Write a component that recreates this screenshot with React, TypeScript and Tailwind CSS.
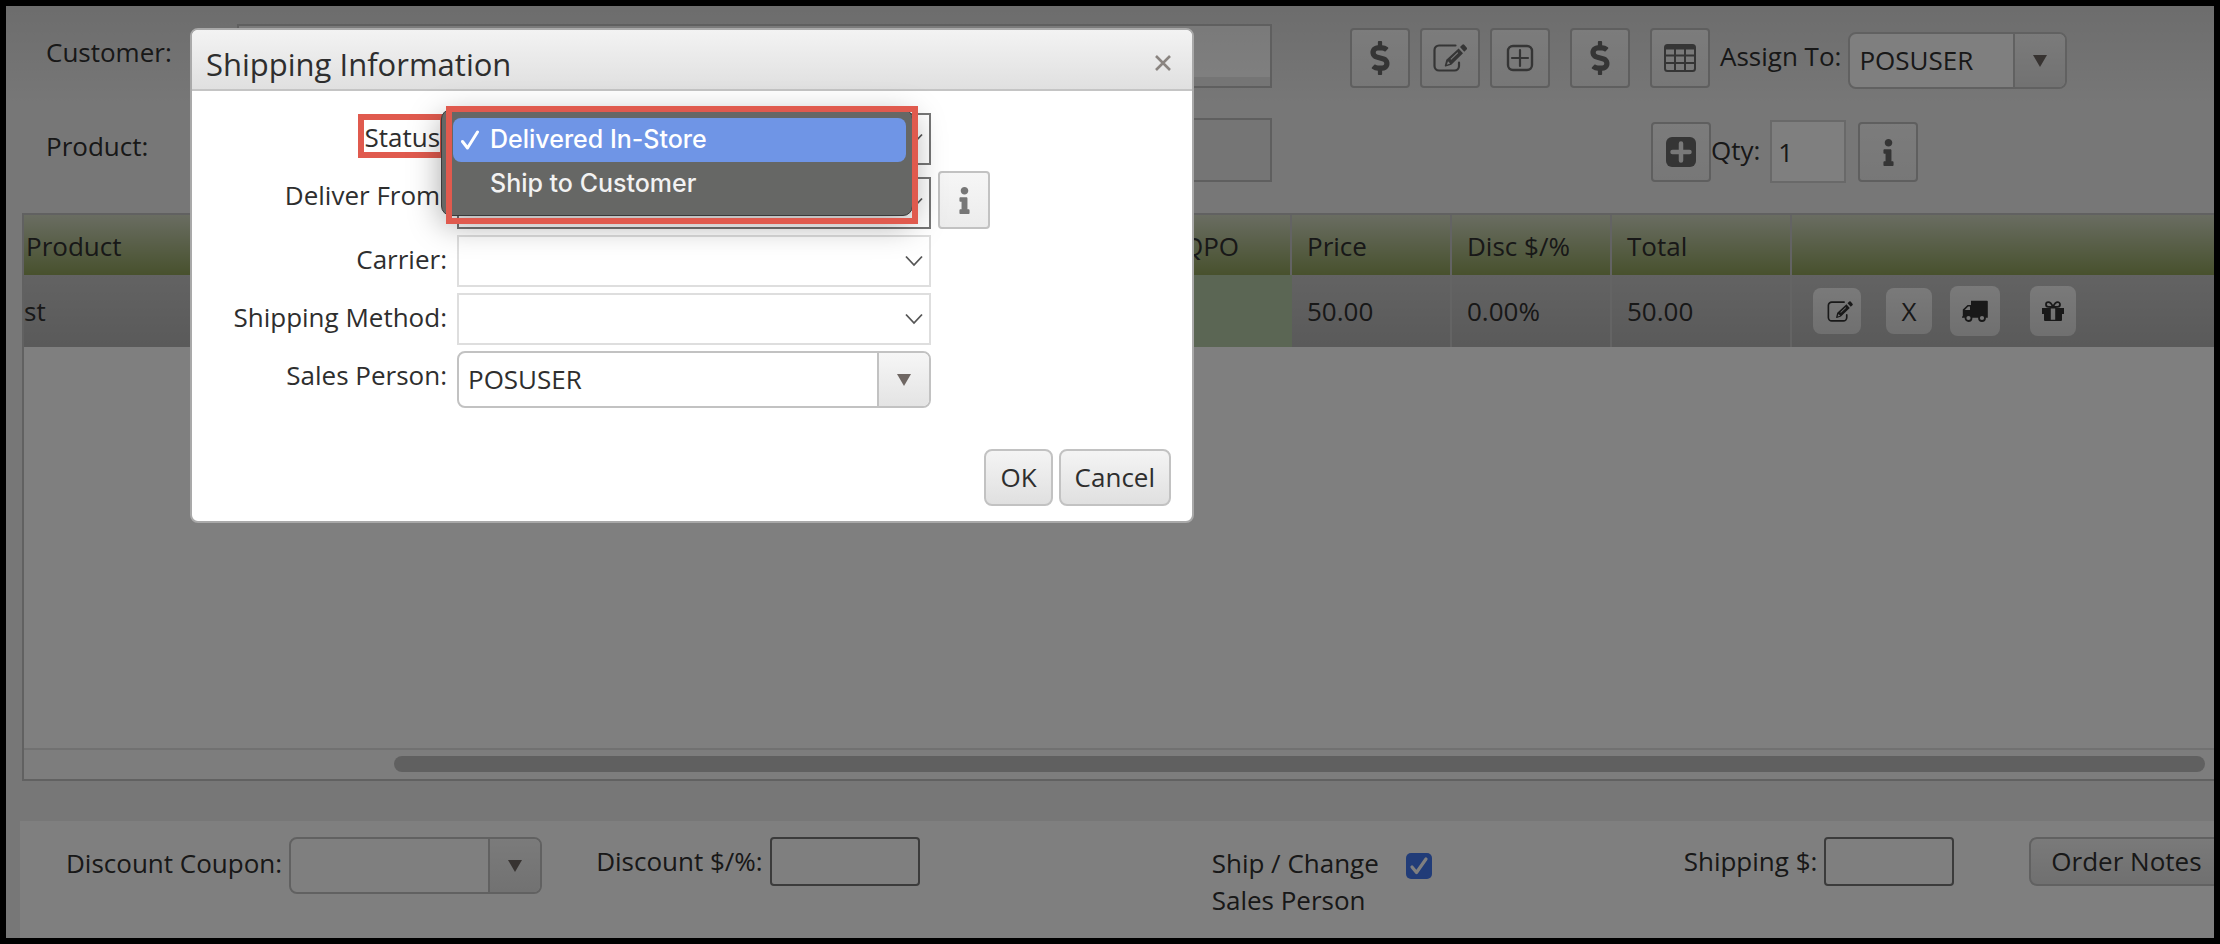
import { FaDollarSign, FaInfo } from 'react-icons/fa'
import { useState, type ReactNode } from 'react'

const toolButton =
  'flex h-[60px] w-[60px] shrink-0 items-center justify-center rounded-[4px] border-2 border-[#bebebe] bg-linear-to-b from-[#f8f8f8] to-[#efefef] text-[#6a6a6a]'

const rowButton =
  'flex shrink-0 items-center justify-center rounded-[8px] bg-linear-to-b from-[#f4f4f4] to-[#e0e0e0] text-[#333]'

function EditIcon({ className }: { className: string }) {
  return (
    <svg className={className} viewBox="0 0 34 28" fill="none" aria-hidden="true">
      <path
        d="M22.500 1.500H6A4.500 4.500 0 0 0 1.500 6v16A4.500 4.500 0 0 0 6 26.500h15.500a4.500 4.500 0 0 0 4.500-4.500v-3.500"
        stroke="currentColor"
        strokeWidth="2.200"
        strokeLinecap="round"
      />
      <path fill="currentColor" d="m27 3 2.300-2.200a1.300 1.300 0 0 1 1.900 0l2.400 2.800a1.300 1.300 0 0 1 0 1.900L31.300 7.700z" />
      <path
        fill="currentColor"
        fillRule="evenodd"
        d="m25.600 4.400 4.400 4.800L18.300 20.700l-5.600 1.800a.7.700 0 0 1-.9-.9l1.500-5.800zM15 17.200l-1.200 3.600 3.400-1.200zM24.500 8.200l-7 6.800.7.800 7-6.800z"
      />
    </svg>
  )
}

function PlusOutlineIcon() {
  return (
    <svg width="28" height="28" viewBox="0 0 28 28" fill="none" stroke="currentColor" aria-hidden="true">
      <rect x="2" y="2" width="24" height="24" rx="5" strokeWidth="2.400" />
      <path d="M14 6v16M6 14h16" strokeWidth="2.200" strokeLinecap="round" />
    </svg>
  )
}

function PlusSolidIcon() {
  return (
    <svg width="30" height="30" viewBox="0 0 30 30" aria-hidden="true">
      <rect width="30" height="30" rx="6" fill="currentColor" />
      <path d="M15 6.500v17M6.500 15h17" stroke="#f2f2f2" strokeWidth="4.500" strokeLinecap="round" />
    </svg>
  )
}

function GridIcon() {
  return (
    <svg width="32" height="28" viewBox="0 0 32 28" fill="none" stroke="currentColor" aria-hidden="true">
      <rect x="1" y="1" width="30" height="26" rx="2.500" strokeWidth="2" />
      <path d="M1 3.500h30" strokeWidth="4" />
      <path d="M1 11.500h30M1 19h30M11 4v23M21 4v23" strokeWidth="2" />
    </svg>
  )
}

function TruckIcon() {
  return (
    <svg width="26" height="22" viewBox="0 0 26 22" aria-hidden="true">
      <path
        fill="currentColor"
        fillRule="evenodd"
        d="M9 .8h16a.8.8 0 0 1 .8.8v16.200H9zM0 17.800v-1l.8-.8V9.600L5.600 5H9v12.800zM2.800 10H8V6.600H6.200z"
      />
      <circle cx="6.500" cy="18" r="3" fill="#ececec" stroke="currentColor" strokeWidth="1.800" />
      <circle cx="20" cy="18" r="3" fill="#ececec" stroke="currentColor" strokeWidth="1.800" />
    </svg>
  )
}

function GiftIcon() {
  return (
    <svg width="22" height="20" viewBox="0 0 22 20" aria-hidden="true">
      <path fill="currentColor" d="M0 7h8.800v13H3a1 1 0 0 1-1-1v-6H0zM13.200 7H22v6h-2v6a1 1 0 0 1-1 1h-5.800z" />
      <path
        d="M11 6C9.500 2.500 8 1.200 6.300 1.200a2.300 2.300 0 0 0 0 4.600zM11 6c1.500-3.500 3-4.800 4.700-4.800a2.300 2.300 0 0 1 0 4.600z"
        fill="none"
        stroke="currentColor"
        strokeWidth="1.800"
      />
      <path fill="currentColor" d="M8 6h6v1.600H8zM8 18.800h6V20H8z" />
    </svg>
  )
}

interface ComboProps {
  id: string
  defaultValue?: string
  className: string
}

function Combo({ id, defaultValue, className }: ComboProps) {
  return (
    <div className={`flex h-[57px] shrink-0 overflow-hidden rounded-[8px] border-2 border-[#c2c2c2] bg-white ${className}`}>
      <input id={id} defaultValue={defaultValue} className="min-w-0 flex-1 px-[9px] outline-none" />
      <button
        type="button"
        aria-label="Open list"
        className="flex w-[52px] shrink-0 items-center justify-center border-l-2 border-[#c2c2c2] bg-linear-to-b from-[#f6f6f6] to-[#e4e4e4] text-[#6f6763]"
      >
        <svg width="14" height="12" viewBox="0 0 14 12" aria-hidden="true">
          <path fill="currentColor" d="M0 0h14L7 12z" />
        </svg>
      </button>
    </div>
  )
}

function Select({ id, className }: { id: string; className: string }) {
  return (
    <div className="relative">
      <select id={id} className={`block h-[52px] w-full appearance-none border-2 bg-transparent ${className}`} />
      <svg
        className="pointer-events-none absolute top-[20px] right-[8px]"
        width="18"
        height="12"
        viewBox="0 0 18 12"
        fill="none"
        stroke="#555"
        strokeWidth="1.800"
        aria-hidden="true"
      >
        <path d="m1 1.500 8 8.500 8-8.500" />
      </svg>
    </div>
  )
}

function Field({ htmlFor, label, children }: { htmlFor: string; label: string; children: ReactNode }) {
  return (
    <div className="flex">
      <label htmlFor={htmlFor} className="w-[255px] shrink-0 pt-[6px] text-right leading-[36px]">
        {label}
      </label>
      <div className="ml-[10px] w-[474px]">{children}</div>
    </div>
  )
}

const statusOptions = ['Delivered In-Store', 'Ship to Customer']

function StatusField() {
  const [selected, setSelected] = useState(statusOptions[0])

  return (
    <div className="relative">
      <Field htmlFor="status" label="Status:">
        <Select id="status" className="border-[#767676]" />
      </Field>
      <span className="absolute top-[1px] left-[166px] h-[44px] w-[88px] border-6 border-[#e05a4e]" />
      <ul
        role="listbox"
        aria-label="Status"
        className="absolute top-[-4px] left-[249px] z-10 h-[107px] w-[472px] rounded-[10px] border border-[#3a3a3a] bg-[#666765] pt-[8px] pr-[6px] pl-[11px] font-['Inter',sans-serif] text-[25px] font-medium text-[#f2f2f2] shadow-[0_8px_32px_rgba(0,0,0,0.35)]"
      >
        {statusOptions.map((option) => (
          <li
            key={option}
            role="option"
            aria-selected={option === selected}
            onClick={() => setSelected(option)}
            className={`flex h-[44px] items-center rounded-[8px] pl-[8px] ${option === selected ? 'bg-[#6f95e6] text-white' : ''}`}
          >
            <span className="w-[29px]">
              {option === selected && (
                <svg width="18" height="20" viewBox="0 0 18 20" fill="none" stroke="currentColor" strokeWidth="3" strokeLinecap="round" strokeLinejoin="round" aria-hidden="true">
                  <path d="m1.500 11.500 5 6.500 10-16" />
                </svg>
              )}
            </span>
            {option}
          </li>
        ))}
      </ul>
      <span className="pointer-events-none absolute top-[-7px] left-[254px] z-20 h-[118px] w-[472px] border-6 border-[#e05a4e]" />
    </div>
  )
}

function ShippingDialog() {
  const actionButton =
    'h-[57px] rounded-[8px] border-2 border-[#c2c2c2] bg-linear-to-b from-[#f4f4f4] to-[#e0e0e0] px-[14px]'

  return (
    <div
      role="dialog"
      aria-labelledby="dialog-title"
      className="absolute top-[22px] left-[184px] w-[1004px] rounded-[8px] border-2 border-[#a9a9a9] bg-white text-[#2e2e2e]"
    >
      <header className="flex h-[61px] items-center justify-between rounded-t-[6px] border-b-2 border-[#c4c4c4] bg-linear-to-b from-[#f3f3f3] to-[#e0e0e0] pr-[20px] pl-[14px]">
        <h2 id="dialog-title" className="pt-[8px] text-[31px] leading-[40px]">
          Shipping Information
        </h2>
        <button type="button" aria-label="Close" className="p-[1px] pt-[8px] text-[#8a8480]">
          <svg width="16" height="16" viewBox="0 0 16 16" stroke="currentColor" strokeWidth="2.600" aria-hidden="true">
            <path d="m1 1 14 14M15 1 1 15" />
          </svg>
        </button>
      </header>

      <div className="flex flex-col gap-[6px] pt-[22px]">
        <StatusField />
        <div className="flex items-start">
          <Field htmlFor="deliver-from" label="Deliver From:">
            <div className="pt-[6px]">
              <Select id="deliver-from" className="border-[#767676]" />
            </div>
          </Field>
          <button
            type="button"
            aria-label="Store details"
            className="ml-[7px] flex h-[58px] w-[52px] items-center justify-center rounded-[4px] border-2 border-[#c2c2c2] bg-linear-to-b from-[#f6f6f6] to-[#ececec] text-[#777]"
          >
            <FaInfo size={27} />
          </button>
        </div>
        <Field htmlFor="carrier" label="Carrier:">
          <Select id="carrier" className="border-[#dedede]" />
        </Field>
        <Field htmlFor="method" label="Shipping Method:">
          <Select id="method" className="border-[#dedede]" />
        </Field>
        <Field htmlFor="sales-person" label="Sales Person:">
          <Combo id="sales-person" defaultValue="POSUSER" className="w-full" />
        </Field>
      </div>

      <footer className="flex justify-end gap-[6px] pt-[41px] pr-[21px] pb-[15px]">
        <button type="button" className={actionButton}>
          OK
        </button>
        <button type="button" className={actionButton}>
          Cancel
        </button>
      </footer>
    </div>
  )
}

function OrderHeader() {
  return (
    <div className="flex flex-col gap-[30px] pt-[18px] pl-[40px]">
      <div className="flex h-[64px] items-start">
        <label htmlFor="customer" className="w-[191px] shrink-0 pt-[10px] leading-[36px]">
          Customer:
        </label>
        <input
          id="customer"
          className="h-[64px] w-[1035px] border-2 border-[#bebebe] bg-linear-to-b from-[#f4f4f4] from-0% via-white via-85% to-[#eaeaea] to-85%"
        />
        <div className="ml-[78px] flex items-start gap-[10px] pt-[4px]">
          <button type="button" aria-label="Payments" className={toolButton}>
            <FaDollarSign size={34} />
          </button>
          <button type="button" aria-label="Edit customer" className={toolButton}>
            <EditIcon className="h-[28px] w-[34px]" />
          </button>
          <button type="button" aria-label="Add customer" className={toolButton}>
            <PlusOutlineIcon />
          </button>
          <button type="button" aria-label="Balance" className={`ml-[10px] ${toolButton}`}>
            <FaDollarSign size={34} />
          </button>
          <button type="button" aria-label="Order list" className={`ml-[10px] ${toolButton}`}>
            <GridIcon />
          </button>
          <label htmlFor="assign-to" className="shrink-0 pt-[10px] leading-[36px]">
            Assign To:
          </label>
        </div>
        <div className="ml-[7px] pt-[8px]">
          <Combo id="assign-to" defaultValue="POSUSER" className="w-[219px]" />
        </div>
      </div>

      <div className="flex h-[64px] items-start">
        <label htmlFor="product" className="w-[191px] shrink-0 pt-[10px] leading-[36px]">
          Product:
        </label>
        <input id="product" className="h-[64px] w-[1035px] border-2 border-[#bebebe] bg-[#ebebeb]" />
        <div className="ml-[379px] flex items-start pt-[4px]">
          <button type="button" aria-label="Add product" className={toolButton}>
            <PlusSolidIcon />
          </button>
          <label htmlFor="qty" className="shrink-0 pt-[10px] leading-[36px]">
            Qty:
          </label>
          <input
            id="qty"
            defaultValue="1"
            className="-mt-[2px] mr-[12px] ml-[10px] h-[63px] w-[76px] border-2 border-[#d2d2d2] bg-white px-[6px]"
          />
          <button type="button" aria-label="Product details" className={toolButton}>
            <FaInfo size={27} />
          </button>
        </div>
      </div>
    </div>
  )
}

function OrderTable() {
  const head = 'h-[60px] border-r-2 border-[#c6c6c6] pt-[2px] pl-[15px] text-left font-normal'
  const cell = 'h-[72px] border-r-2 border-[#c8c8c8] pl-[15px]'

  return (
    <div className="mt-[31px] ml-[16px] flex h-[568px] flex-col overflow-hidden border-2 border-r-0 border-[#c2c2c2] bg-white">
      <table className="w-full table-fixed border-separate border-spacing-0">
        <colgroup>
          <col className="w-[1144px]" />
          <col className="w-[124px]" />
          <col className="w-[160px]" />
          <col className="w-[160px]" />
          <col className="w-[180px]" />
          <col />
        </colgroup>
        <thead>
          <tr className="bg-linear-to-b from-[#d4dac4] to-[#90a25a]">
            <th className="h-[60px] pt-[2px] pl-[2px] text-left font-normal">Product</th>
            <th className={head}>QPO</th>
            <th className={head}>Price</th>
            <th className={head}>Disc $/%</th>
            <th className={head}>Total</th>
            <th aria-label="Actions" />
          </tr>
        </thead>
        <tbody>
          <tr className="bg-linear-to-b from-[#c6c6c6] to-[#b4b4b4]">
            <td className="h-[72px]">st</td>
            <td className="bg-[#b6cca8]" />
            <td className={cell}>50.00</td>
            <td className={cell}>0.00%</td>
            <td className={cell}>50.00</td>
            <td>
              <div className="flex items-center pl-[21px]">
                <button type="button" aria-label="Edit line" className={`h-[46px] w-[48px] pl-[6px] ${rowButton}`}>
                  <EditIcon className="h-[21px] w-[26px]" />
                </button>
                <button type="button" className={`ml-[25px] h-[46px] w-[46px] ${rowButton}`}>
                  X
                </button>
                <button type="button" aria-label="Ship line" className={`ml-[18px] h-[50px] w-[50px] ${rowButton}`}>
                  <TruckIcon />
                </button>
                <button type="button" aria-label="Gift options" className={`ml-[30px] h-[50px] w-[46px] ${rowButton}`}>
                  <GiftIcon />
                </button>
              </div>
            </td>
          </tr>
        </tbody>
      </table>
      <div className="mt-auto h-[31px] border-t-2 border-[#e2e2e2] bg-[#fafafa] pt-[6px] pr-[9px] pl-[370px]">
        <div className="h-[16px] rounded-full bg-[#c1c1c1]" />
      </div>
    </div>
  )
}

function OrderFooter() {
  const box = 'h-[49px] shrink-0 rounded-[4px] border-2 border-[#767676] bg-white px-[8px]'

  return (
    <div className="mt-[40px] ml-[14px] flex min-h-0 flex-1 items-start overflow-hidden bg-white pt-[16px] pl-[46px] whitespace-nowrap">
      <label htmlFor="coupon" className="shrink-0 pt-[8px] leading-[36px]">
        Discount Coupon:
      </label>
      <Combo id="coupon" className="ml-[7px] w-[253px]" />
      <label htmlFor="discount" className="ml-[54px] shrink-0 pt-[6px] leading-[36px]">
        Discount $/%:
      </label>
      <input id="discount" className={`ml-[7px] w-[150px] ${box}`} />
      <label htmlFor="ship-change" className="ml-[292px] w-[194px] shrink-0 pt-[8px] leading-[37px]">
        Ship / Change
        <br />
        Sales Person
      </label>
      <span className="relative mt-[16px] h-[26px] w-[26px] shrink-0">
        <input
          id="ship-change"
          type="checkbox"
          defaultChecked
          className="peer block h-[26px] w-[26px] appearance-none rounded-[5px] border-2 border-[#767676] checked:border-0 checked:bg-[#4378f0]"
        />
        <svg
          className="pointer-events-none absolute top-[3px] left-[3px] hidden peer-checked:block"
          width="20"
          height="20"
          viewBox="0 0 20 20"
          fill="none"
          stroke="white"
          strokeWidth="3.200"
          strokeLinecap="round"
          strokeLinejoin="round"
          aria-hidden="true"
        >
          <path d="m3 11 4.500 5.500L17 3" />
        </svg>
      </span>
      <label htmlFor="shipping-cost" className="ml-[252px] shrink-0 pt-[6px] leading-[36px]">
        Shipping $:
      </label>
      <input id="shipping-cost" className={`ml-[7px] w-[130px] ${box}`} />
      <button
        type="button"
        className="ml-[75px] h-[49px] shrink-0 rounded-[8px] border-2 border-[#c2c2c2] bg-linear-to-b from-[#f4f4f4] to-[#e0e0e0] px-[20px]"
      >
        Order Notes
      </button>
    </div>
  )
}

export default function App() {
  return (
    <div className="relative flex min-h-screen flex-col overflow-hidden border-6 border-black bg-linear-to-b from-[#dadada] to-[#efefef] to-[100px] font-['Open_Sans','Noto_Sans',sans-serif] text-[26px] text-[#303030]">
      <OrderHeader />
      <OrderTable />
      <OrderFooter />
      <div className="absolute inset-0 bg-black/50" />
      <ShippingDialog />
    </div>
  )
}
